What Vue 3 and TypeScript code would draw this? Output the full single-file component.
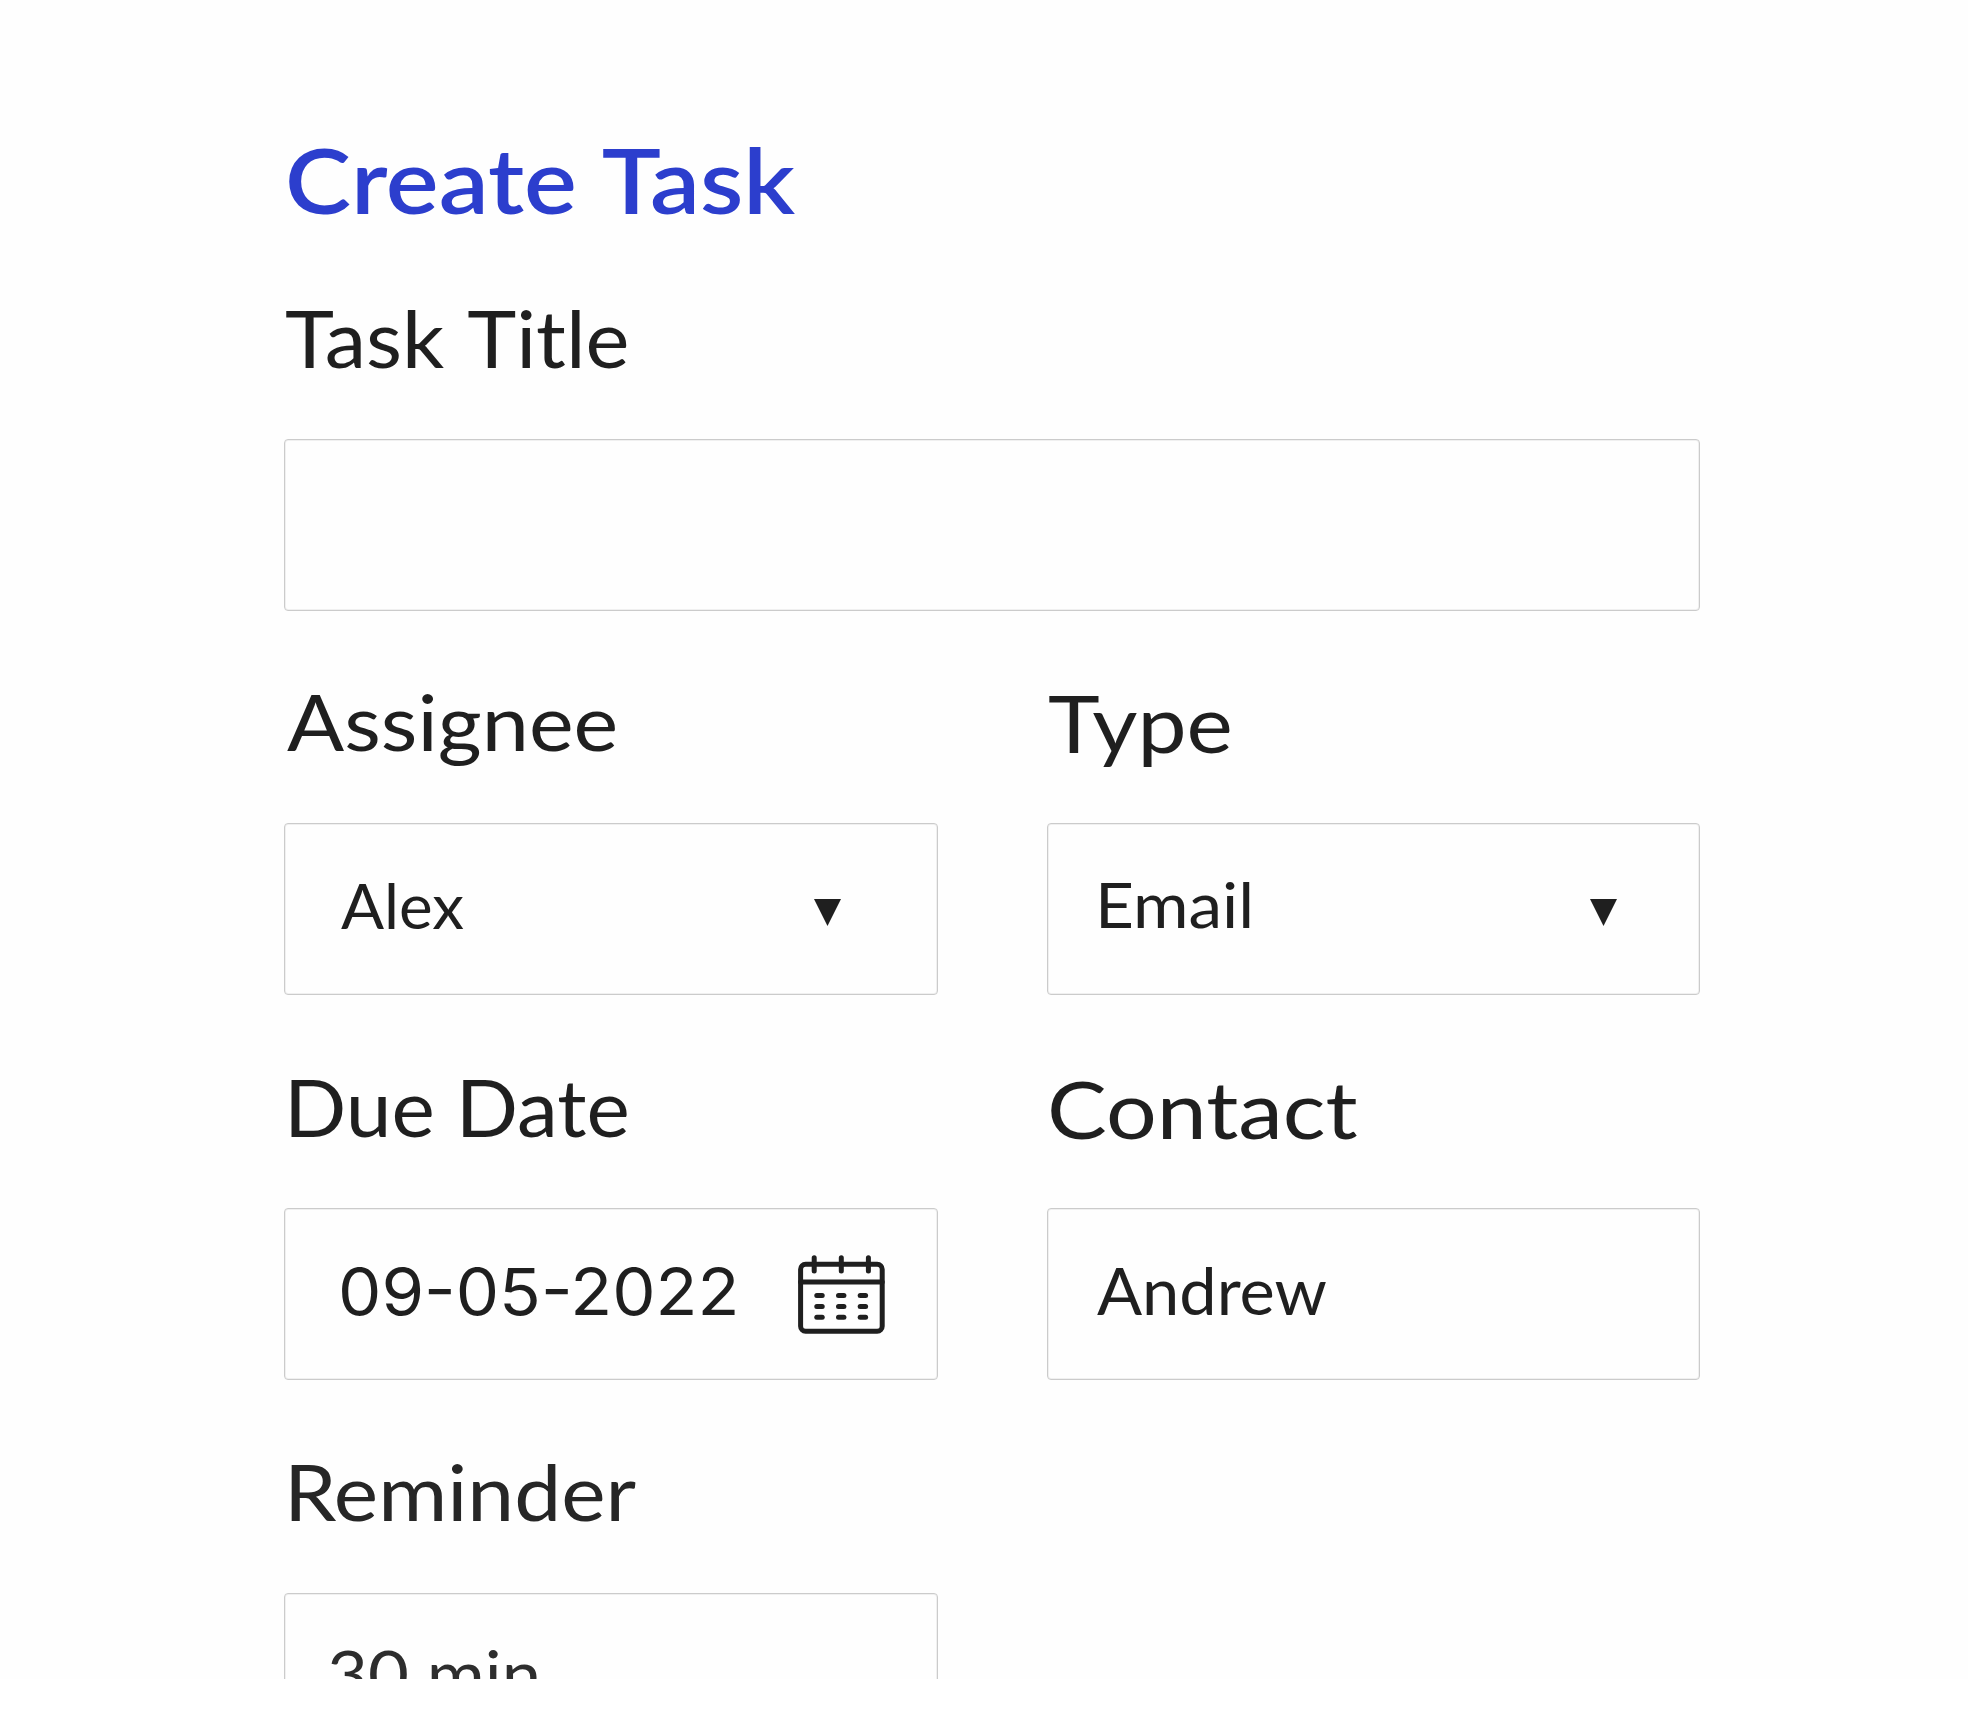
<script setup lang="ts">
interface Field {
  id: string
  label: string
  value: string
  icon?: 'caret' | 'calendar'
}

const title: Field = { id: 'title', label: 'Task Title', value: '' }

const rows: Field[][] = [
  [
    { id: 'assignee', label: 'Assignee', value: 'Alex', icon: 'caret' },
    { id: 'type', label: 'Type', value: 'Email', icon: 'caret' },
  ],
  [
    { id: 'due', label: 'Due Date', value: '09-05-2022', icon: 'calendar' },
    { id: 'contact', label: 'Contact', value: 'Andrew' },
  ],
  [{ id: 'reminder', label: 'Reminder', value: '30 min' }],
]

const dotColumns = [20.3, 42, 63.7]
const dotRows = [40.5, 51.4, 62.3]
</script>

<template>
  <main class="page">
    <form class="form">
      <h1 class="heading">Create Task</h1>
      <div class="rows">
        <div class="field" :class="title.id">
          <div class="label">{{ title.label }}</div>
          <div class="box"></div>
        </div>
        <div v-for="(row, i) in rows" :key="i" class="row">
          <div v-for="f in row" :key="f.id" class="field" :class="f.id">
            <div class="label">{{ f.label }}</div>
            <div class="box">
              <span class="value">{{ f.value }}</span>
              <svg v-if="f.icon === 'caret'" class="caret" viewBox="0 0 27 27">
                <path d="M0 0H27L13.5 27Z" fill="#1f1f1f" />
              </svg>
              <svg
                v-if="f.icon === 'calendar'"
                class="calendar"
                viewBox="0 0 87 79"
                fill="none"
                stroke="#1f1f1f"
                stroke-width="5"
                stroke-linecap="round"
              >
                <rect x="2.6" y="9.3" width="81.6" height="67" rx="5" />
                <path d="M2.6 27H84.2" />
                <path d="M16.2 2.7V16M43.3 2.7V16M70.4 2.7V16" />
                <template v-for="y in dotRows" :key="y">
                  <path v-for="x in dotColumns" :key="x" :d="`M${x - 1.5} ${y}h5.4`" />
                </template>
              </svg>
            </div>
          </div>
        </div>
      </div>
    </form>
  </main>
</template>

<style>
body {
  background: #fff;
}
</style>

<style scoped>
.page {
  height: 1679px;
  overflow: hidden;
  background: #fefefe;
  font-family: Lato, "Open Sans", sans-serif;
  color: #1f1f1f;
}
.form {
  box-sizing: border-box;
  width: 1700px;
  padding: 130px 0 0 284px;
}
.heading {
  box-sizing: border-box;
  width: fit-content;
  height: 163px;
  margin: 0 0 0 1px;
  font-size: 90px;
  line-height: 99px;
  font-weight: 600;
  word-spacing: 3px;
  color: #2c3ecd;
  white-space: nowrap;
  transform: scaleX(1.105);
  transform-origin: left;
}
.rows {
  display: flex;
  flex-direction: column;
  gap: 66.4px;
}
.row {
  display: grid;
  grid-template-columns: 654px 653px;
  column-gap: 109px;
}
.label {
  box-sizing: border-box;
  width: fit-content;
  height: 146px;
  line-height: 80px;
  white-space: nowrap;
  transform-origin: left;
}
.box {
  box-sizing: border-box;
  display: flex;
  align-items: center;
  height: 172px;
  border: 1px solid #cbcbcb;
  border-radius: 4px;
  box-shadow: inset 0 0 0 1px #f0f0f0;
}
.value {
  line-height: 80px;
  white-space: nowrap;
  transform-origin: left;
}
.caret {
  width: 27px;
  height: 27px;
  margin-left: auto;
  margin-top: 6px;
}
.calendar {
  width: 87px;
  height: 79px;
  margin-left: auto;
  margin-top: 2px;
  margin-right: 52px;
}
.title .label { padding-top: 5px; margin-left: 1px; font-size: 79px; word-spacing: 4px; transform: scaleX(1.053); }

.assignee .label { padding-top: 4px; margin-left: 3px; font-size: 78px; transform: scaleX(1.084); }
.assignee .value { padding-bottom: 9px; margin-left: 56px; font-size: 62.5px; transform: scaleX(1.02); }
.assignee .caret { margin-right: 96px; }

.type .label { padding-top: 5px; margin-left: 1px; font-size: 80px; transform: scaleX(1.096); }
.type .value { padding-bottom: 11px; margin-left: 47px; font-size: 62.5px; transform: scaleX(1.08); }
.type .caret { margin-right: 82px; }

.due .label { padding-top: 5px; font-size: 79px; transform: scaleX(1.038); }
.due .value { padding-bottom: 4px; margin-left: 53px; font-family: Inter, sans-serif; font-size: 64.6px; transform: scaleX(1.065); }

.contact .label { padding-top: 6px; font-size: 80px; transform: scaleX(1.12); }
.contact .value { padding-bottom: 7px; margin-left: 49px; font-size: 65px; transform: scaleX(1.027); }

.reminder .label { height: 147px; padding-top: 5px; font-size: 78px; transform: scaleX(1.076); color: #262626; }
.reminder .value { padding-bottom: 12px; margin-left: 41.5px; font-size: 65px; transform: scaleX(1.085); color: #2d2d2d; }
</style>
